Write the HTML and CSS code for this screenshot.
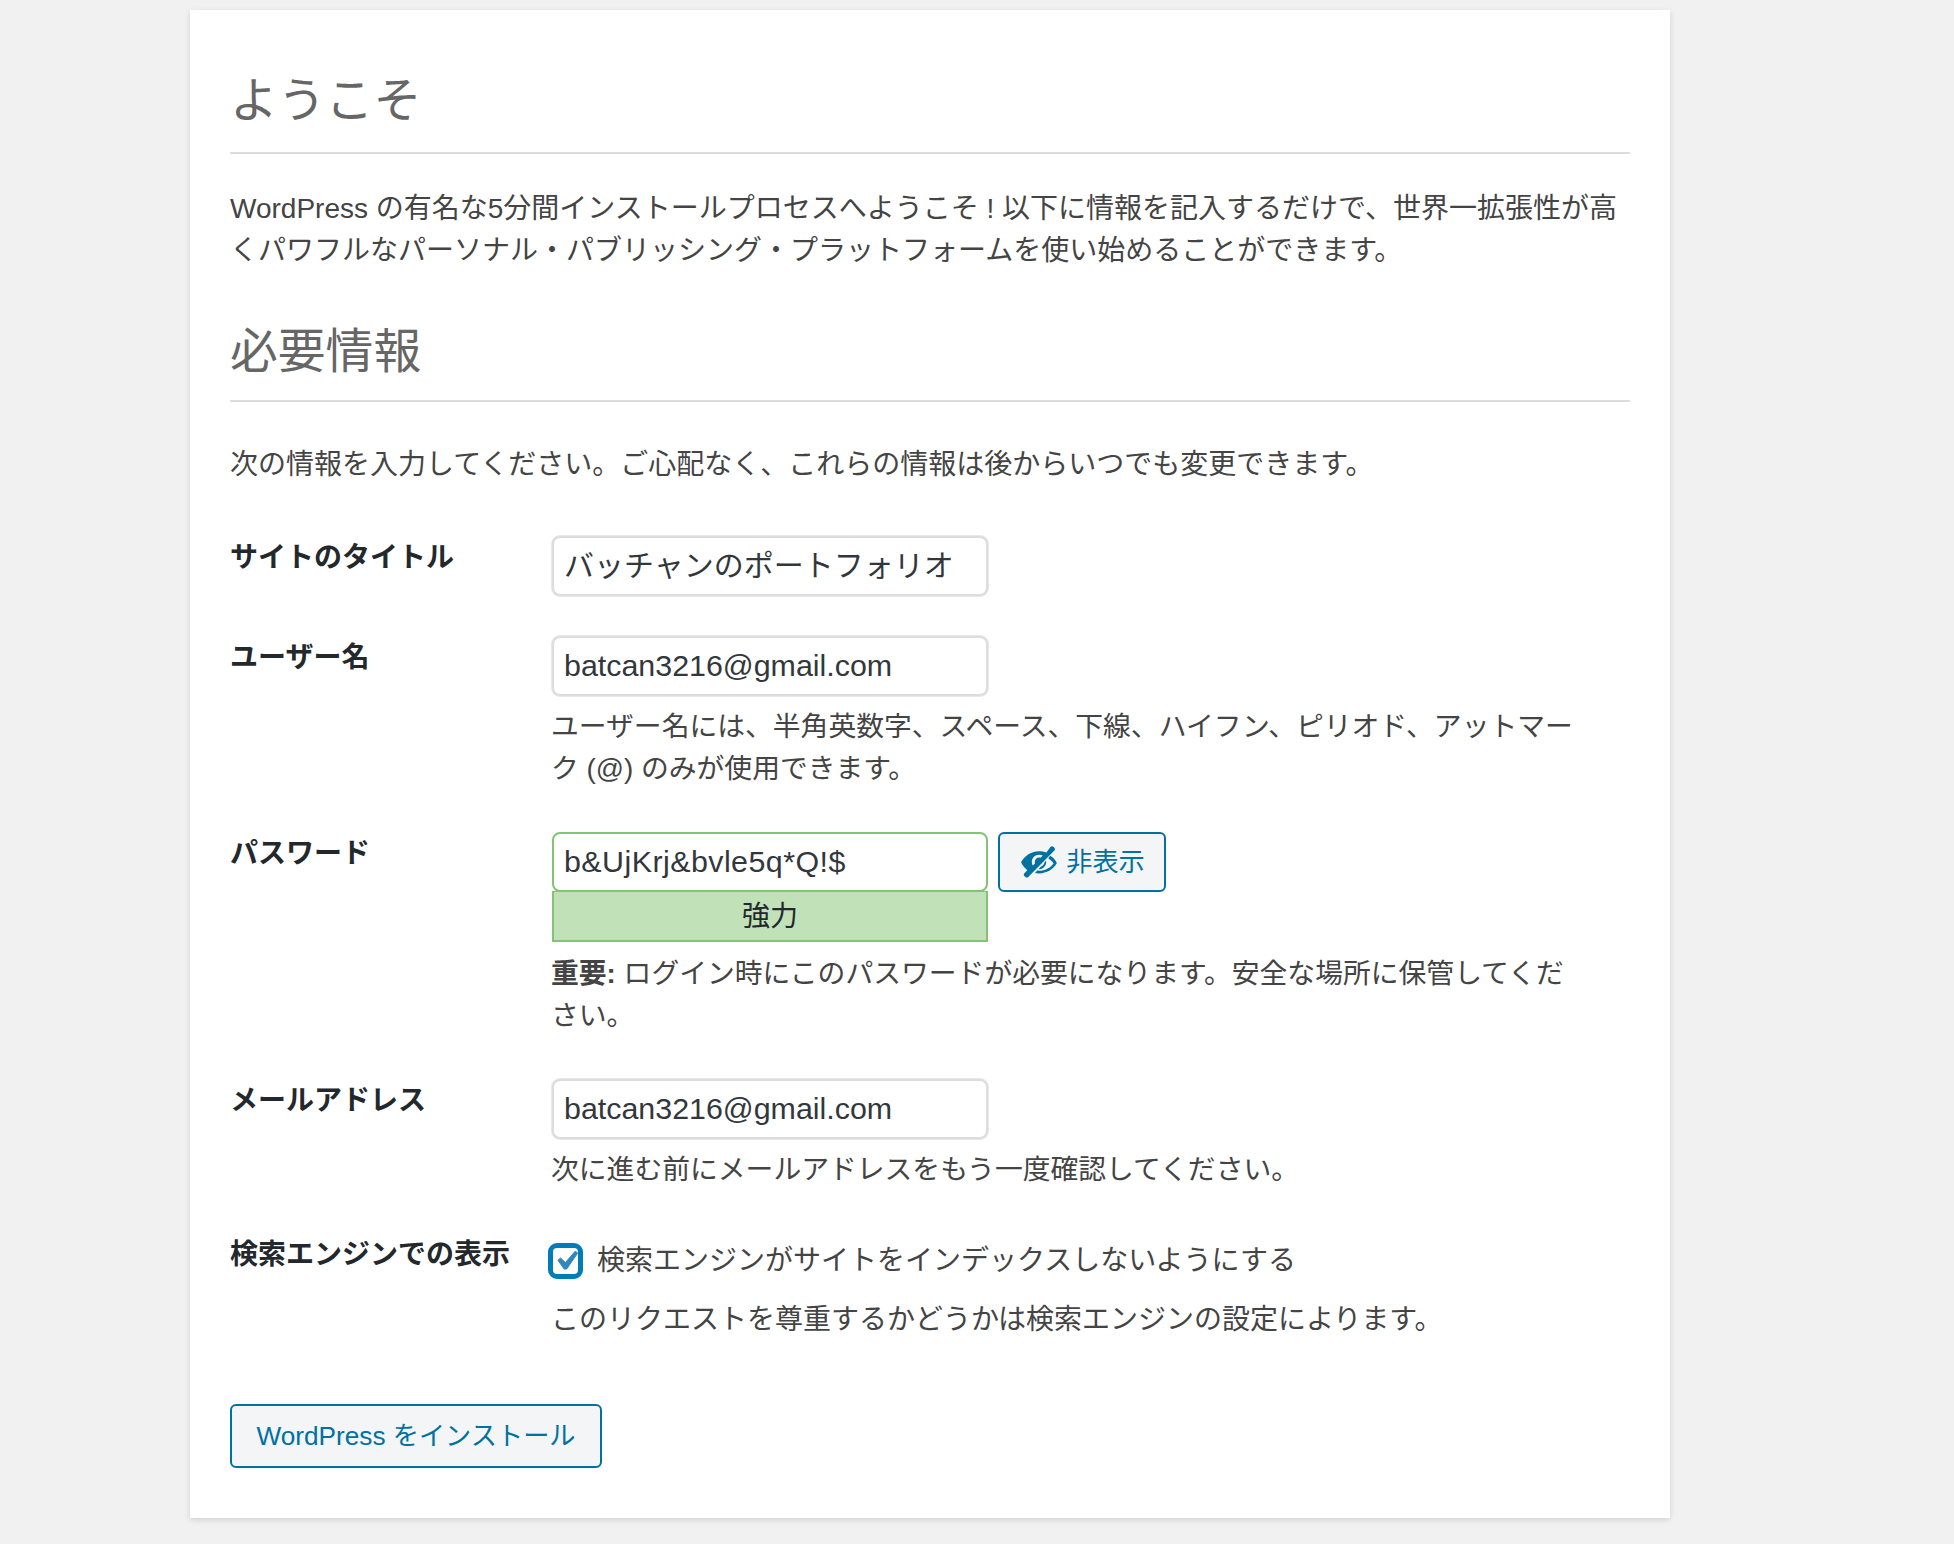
FILE: index.html
```html
<!DOCTYPE html>
<html lang="ja">
<head>
<meta charset="utf-8">
<title>WordPress インストール</title>
<link rel="stylesheet" href="styles.css">
</head>
<body>
<main class="card">
  <h1 class="heading first">ようこそ</h1>
  <p class="intro">WordPress の有名な5分間インストールプロセスへようこそ ! 以下に情報を記入するだけで、世界一拡張性が高くパワフルなパーソナル・パブリッシング・プラットフォームを使い始めることができます。</p>
  <h1 class="heading second">必要情報</h1>
  <p class="lead">次の情報を入力してください。ご心配なく、これらの情報は後からいつでも変更できます。</p>
  <form class="form">
    <div class="row">
      <label class="label">サイトのタイトル</label>
      <div class="field"><input class="input cjk" type="text" value="バッチャンのポートフォリオ"></div>
    </div>
    <div class="row">
      <label class="label">ユーザー名</label>
      <div class="field">
        <input class="input" type="text" value="batcan3216@gmail.com">
        <p class="desc">ユーザー名には、半角英数字、スペース、下線、ハイフン、ピリオド、アットマーク (@) のみが使用できます。</p>
      </div>
    </div>
    <div class="row">
      <label class="label">パスワード</label>
      <div class="field">
        <div class="pass">
          <div class="pass-col">
            <input class="input strong" type="text" value="b&amp;UjKrj&amp;bvle5q*Q!$">
            <div class="meter">強力</div>
          </div>
          <button class="btn hide" type="button">
            <svg class="eye" viewBox="0 0 20 20" aria-hidden="true"><path d="M17.2 2.4l.5.5c.4.4.4 1 0 1.400L4.600 17.500c-.4.4-1 .4-1.400 0l-.5-.5c-.4-.4-.4-1 0-1.400l1.500-1.500C3.100 13.200 2 12 1.200 10.500c-.1-.2-.1-.5 0-.7C3 6.700 6.300 4.600 10 4.600c1.300 0 2.500.2 3.700.7l2.100-2.900c.4-.4 1-.4 1.400 0zM10 6.400c-2 0-3.600 1.600-3.600 3.600 0 .7.200 1.300.5 1.800l1.100-1.100c-.1-.2-.1-.5-.1-.7 0-1.200 1-2.200 2.200-2.200.3 0 .5 0 .7.100l1.100-1.100c-.6-.3-1.200-.4-1.900-.4zM15.600 6.900c1.300.8 2.400 1.900 3.200 3.300.1.200.1.400 0 .6-1.800 3-5 4.900-8.800 4.900-.7 0-1.300-.1-2-.2l1.100-1.200c.3 0 .6.100.9.100 3 0 5.700-1.500 7.300-3.700a10 10 0 0 0-2.700-2.600zM13.500 9.200c.1.300.1.500.1.800 0 2-1.600 3.600-3.600 3.600h-.3l1.300-1.300c.8-.3 1.400-.9 1.600-1.700z"/></svg>
            <span class="hide-text">非表示</span>
          </button>
        </div>
        <p class="desc desc-pass"><strong class="strong-text">重要:</strong> ログイン時にこのパスワードが必要になります。安全な場所に保管してください。</p>
      </div>
    </div>
    <div class="row">
      <label class="label">メールアドレス</label>
      <div class="field">
        <input class="input" type="text" value="batcan3216@gmail.com">
        <p class="desc">次に進む前にメールアドレスをもう一度確認してください。</p>
      </div>
    </div>
    <div class="row last">
      <label class="label">検索エンジンでの表示</label>
      <div class="field">
        <div class="check-line">
          <span class="check"><svg viewBox="0 0 20 20" aria-hidden="true"><path d="M14.830 4.890l1.340.940-5.810 8.380H9.020L5.780 9.670l1.340-1.250 2.570 2.400z"/></svg></span>
          <span>検索エンジンがサイトをインデックスしないようにする</span>
        </div>
        <p class="desc desc-check">このリクエストを尊重するかどうかは検索エンジンの設定によります。</p>
      </div>
    </div>
    <button class="btn install" type="button">WordPress をインストール</button>
  </form>
</main>
</body>
</html>
```
FILE: styles.css
```css
* { box-sizing: border-box; }
html, body { margin: 0; padding: 0; }
body {
  background: #f1f1f1;
  color: #444;
  font-family: "Liberation Sans", "Noto Sans CJK JP", sans-serif;
  font-size: 28px;
  line-height: 42px;
  padding-top: 10px;
  padding-bottom: 26px;
}
.card {
  width: 1480px;
  margin-left: 190px;
  background: #fff;
  padding: 0 40px 50px;
  box-shadow: 0 2px 6px rgba(0, 0, 0, 0.13);
}
.heading {
  margin: 0;
  color: #666;
  font-size: 47.8px;
  font-weight: 400;
  line-height: 66px;
  border-bottom: 2px solid #ddd;
}
.heading.first { padding-top: 58px; padding-bottom: 18px; }
.heading.second { padding-top: 0; padding-bottom: 15px; margin-top: 46.500px; }
.intro { margin: 34px 0 0; }
.lead { margin: 42px 0 0; }
.form { margin-top: 50px; }
.row {
  display: grid;
  grid-template-columns: 322px 1fr;
  margin-bottom: 40px;
}
.row.last { margin-bottom: 63px; }
.label {
  color: #23282d;
  font-weight: 700;
  padding-top: 1px;
}
.field { width: 1030px; }
.input {
  display: block;
  width: 436px;
  height: 60px;
  padding: 0 10px 1px;
  font-family: inherit;
  font-size: 30.4px;
  color: #32373c;
  background: #fff;
  border: 2px solid #ddd;
  border-radius: 8px;
  box-shadow: 0 0 0 1px #e8e8e8;
  outline: none;
}
.input.cjk { font-size: 30px; padding-bottom: 6px; }
.desc { margin: 10px 0 2px -1px; font-size: 27.8px; }
.desc-pass { margin-top: 11px; }
.desc-check { margin-top: 17px; margin-bottom: 0; font-size: 28px; }
.pass { display: flex; gap: 10px; align-items: flex-start; }
.pass-col { width: 436px; }
.input.strong {
  border-color: #83c373;
  box-shadow: none;
  letter-spacing: 0.45px;
}
.meter {
  height: 51px;
  margin-top: -1px;
  background: #c1e1b9;
  border: 2px solid #83c373;
  border-top-width: 1px;
  color: #23282d;
  text-align: center;
  line-height: 50px;
}
.btn {
  font-family: inherit;
  color: #0071a1;
  background: #f3f5f6;
  border: 2px solid #0071a1;
  border-radius: 6px;
  cursor: pointer;
}
.hide {
  display: flex;
  align-items: center;
  justify-content: center;
  gap: 7px;
  width: 168px;
  height: 60px;
  padding: 0;
  font-size: 26.2px;
}
.hide-text { padding-bottom: 4px; }
.eye { width: 40px; height: 40px; fill: #0071a1; flex: none; }
.check-line {
  display: flex;
  align-items: center;
  gap: 14px;
  margin-left: -4px;
  margin-top: 7px;
}
.check {
  width: 35px;
  height: 36px;
  flex: none;
  border: 5px solid #007cba;
  border-radius: 9px;
  display: flex;
  align-items: center;
  justify-content: center;
}
.check svg {
  width: 38px;
  height: 38px;
  fill: #2e87bd;
  stroke: #2e87bd;
  stroke-width: 0.5;
  flex: none;
}
.install {
  display: block;
  width: 372px;
  height: 64px;
  padding: 0 0 3px;
  font-size: 26.2px;
}
```
